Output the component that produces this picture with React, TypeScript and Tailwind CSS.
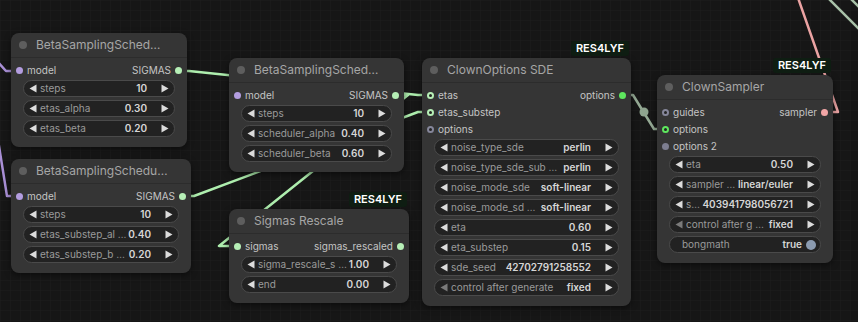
type Dot = 'purple' | 'green' | 'greenRing' | 'grayRing' | 'gray' | 'lime' | 'limeRing' | 'pink'

const dotCls: Record<Dot, string> = {
  purple: 'bg-[#b39de0]',
  green: 'bg-[#b6efb6]',
  greenRing: 'border-2 border-[#b6efb6] bg-[#232323]',
  grayRing: 'border-2 border-[#85869a] bg-[#232323]',
  gray: 'bg-[#7d7e90]',
  lime: 'bg-[#5ee65e]',
  limeRing: 'border-2 border-[#5ee65e] bg-[#232323]',
  pink: 'bg-[#f2a6a6]',
}

type Slot = [string, Dot]
type Row = { in?: Slot; out?: Slot }
type Widget = { label: string; value: string; dim?: boolean; toggle?: boolean }

function SlotDot({ kind }: { kind: Dot }) {
  return <span className={`block w-[7px] h-[7px] rounded-full shrink-0 ${dotCls[kind]}`} />
}

function Arrow({ dir, dim }: { dir: 'l' | 'r'; dim?: boolean }) {
  return (
    <svg width="8" height="9" viewBox="0 0 8 9" className="shrink-0">
      <path d={dir === 'l' ? 'M7.5 0.5 L0.5 4.5 L7.5 8.5 Z' : 'M0.5 0.5 L7.5 4.5 L0.5 8.5 Z'} fill={dim ? '#7a7a7a' : '#dcdcdc'} />
    </svg>
  )
}

function WidgetRow({ w }: { w: Widget }) {
  if (w.toggle) {
    return (
      <div className="mx-[12px] mt-[3px] first:mt-[1px] h-[17px] rounded-full border border-[#4a4a4a] bg-[#222] flex items-center pl-[12px] pr-[4px]">
        <span className="flex-1 text-[#9a9a9a] whitespace-nowrap">{w.label}</span>
        <span className="text-[#d6d6d6] font-semibold">{w.value}</span>
        <span className="ml-[4px] w-[10px] h-[10px] rounded-full bg-[#8b9bb0]" />
      </div>
    )
  }
  return (
    <div className="mx-[12px] mt-[3px] first:mt-[1px] h-[17px] rounded-full border border-[#4a4a4a] bg-[#222] flex items-center pl-[5px] pr-[5px]">
      <Arrow dir="l" dim={w.dim} />
      <span className="ml-[3px] flex-1 min-w-0 text-[#9a9a9a] whitespace-nowrap">{w.label}</span>
      <span className="ml-[3px] shrink-0 text-[#d6d6d6] font-semibold whitespace-nowrap">{w.value}</span>
      <span className="ml-[14px]"><Arrow dir="r" /></span>
    </div>
  )
}

function Node({ x, y, w, title, rows, widgets, badge }: {
  x: number; y: number; w: string; title: string; rows: Row[]; widgets: Widget[]; badge?: boolean
}) {
  return (
    <div className={`absolute ${w} rounded-[8px] bg-[#353535] shadow-[0_2px_6px_rgba(0,0,0,0.5)] text-[10px]`} style={{ left: x, top: y }}>
      {badge && (
        <div className="absolute bottom-full right-[2px] mb-[2px] h-[15px] px-[5px] rounded-[3px] bg-[#0e1d12] text-white font-semibold text-[11px] leading-[15px]">
          RES4LYF
        </div>
      )}
      <div className="h-[25px] border-b border-[#2c2c2c] flex items-center pl-[8px]">
        <span className="w-[8px] h-[8px] rounded-full bg-[#5e5e5e]" />
        <span className="ml-[9px] text-[12px] text-[#a6a6a6] whitespace-nowrap">{title}</span>
      </div>
      <div className="pt-[4px]">
        {rows.map((r, i) => (
          <div key={i} className="h-[17px] flex items-center justify-between px-[5px]">
            <div className="flex items-center gap-[4px]">
              {r.in && <><SlotDot kind={r.in[1]} /><span className="text-[#c4c4c4]">{r.in[0]}</span></>}
            </div>
            <div className="flex items-center gap-[4px]">
              {r.out && <><span className="text-[#c4c4c4]">{r.out[0]}</span><SlotDot kind={r.out[1]} /></>}
            </div>
          </div>
        ))}
      </div>
      <div className="flex flex-col pb-[10px]">
        {widgets.map((wd, i) => <WidgetRow key={i} w={wd} />)}
      </div>
    </div>
  )
}

function Links() {
  return (
    <svg className="absolute inset-0" width="858" height="322">
      <defs>
        <pattern id="grid" width="10" height="10" patternUnits="userSpaceOnUse">
          <path d="M10 0 L0 0 L0 10" fill="none" stroke="#1d1d1d" strokeWidth="1" />
        </pattern>
      </defs>
      <rect width="858" height="322" fill="url(#grid)" />
      <g fill="none" strokeWidth="2.5" strokeLinejoin="round">
        <path d="M-4 60 L6 71 L19 71" stroke="#a98fd6" />
        <path d="M-2 140 L7 196 L19 196" stroke="#a98fd6" />
        <path d="M179 71 L189 71 L418 95 L428 95" stroke="#aeeeae" />
        <path d="M183 196 L194 196 L418 112 L428 112" stroke="#aeeeae" />
        <path d="M397 95 L408 95 L219 246 L237 246" stroke="#aeeeae" />
        <path d="M623 95 L633 95 L654 129 L664 129" stroke="#94a994" />
        <path d="M825 112 L838 112 L797 -5" stroke="#eba3a3" />
        <path d="M828 -2 L860 30" stroke="#a9c2a9" />
        <path d="M850 -2 L862 10" stroke="#a9c2a9" />
      </g>
      <circle cx="644" cy="112" r="4.5" fill="#8fa48f" />
    </svg>
  )
}

export default function App() {
  return (
    <div className="relative w-[858px] h-[322px] overflow-hidden bg-[#161616]" style={{ fontFamily: 'Inter, "Noto Sans", sans-serif' }}>
      <Links />
      <Node x={11} y={33} w="w-[176px]" title="BetaSamplingSched…"
        rows={[{ in: ['model', 'purple'], out: ['SIGMAS', 'green'] }]}
        widgets={[
          { label: 'steps', value: '10' },
          { label: 'etas_alpha', value: '0.30' },
          { label: 'etas_beta', value: '0.20' },
        ]} />
      <Node x={11} y={159} w="w-[180px]" title="BetaSamplingSchedu…"
        rows={[{ in: ['model', 'purple'], out: ['SIGMAS', 'green'] }]}
        widgets={[
          { label: 'steps', value: '10' },
          { label: 'etas_substep_al …', value: '0.40' },
          { label: 'etas_substep_b …', value: '0.20' },
        ]} />
      <Node x={229} y={58} w="w-[175px]" title="BetaSamplingSched…"
        rows={[{ in: ['model', 'purple'], out: ['SIGMAS', 'green'] }]}
        widgets={[
          { label: 'steps', value: '10' },
          { label: 'scheduler_alpha', value: '0.40' },
          { label: 'scheduler_beta', value: '0.60' },
        ]} />
      <Node x={229} y={209} w="w-[180px]" title="Sigmas Rescale" badge
        rows={[{ in: ['sigmas', 'green'], out: ['sigmas_rescaled', 'green'] }]}
        widgets={[
          { label: 'sigma_rescale_s …', value: '1.00' },
          { label: 'end', value: '0.00' },
        ]} />
      <Node x={422} y={58} w="w-[209px]" title="ClownOptions SDE" badge
        rows={[
          { in: ['etas', 'greenRing'], out: ['options', 'lime'] },
          { in: ['etas_substep', 'greenRing'] },
          { in: ['options', 'grayRing'] },
        ]}
        widgets={[
          { label: 'noise_type_sde', value: 'perlin' },
          { label: 'noise_type_sde_sub …', value: 'perlin' },
          { label: 'noise_mode_sde', value: 'soft-linear' },
          { label: 'noise_mode_sd …', value: 'soft-linear' },
          { label: 'eta', value: '0.60' },
          { label: 'eta_substep', value: '0.15' },
          { label: 'sde_seed', value: '42702791258552' },
          { label: 'control after generate', value: 'fixed', dim: true },
        ]} />
      <Node x={657} y={75} w="w-[176px]" title="ClownSampler" badge
        rows={[
          { in: ['guides', 'grayRing'], out: ['sampler', 'pink'] },
          { in: ['options', 'limeRing'] },
          { in: ['options 2', 'gray'] },
        ]}
        widgets={[
          { label: 'eta', value: '0.50' },
          { label: 'sampler …', value: 'linear/euler' },
          { label: 's…', value: '403941798056721' },
          { label: 'control after g …', value: 'fixed', dim: true },
          { label: 'bongmath', value: 'true', toggle: true },
        ]} />
    </div>
  )
}
